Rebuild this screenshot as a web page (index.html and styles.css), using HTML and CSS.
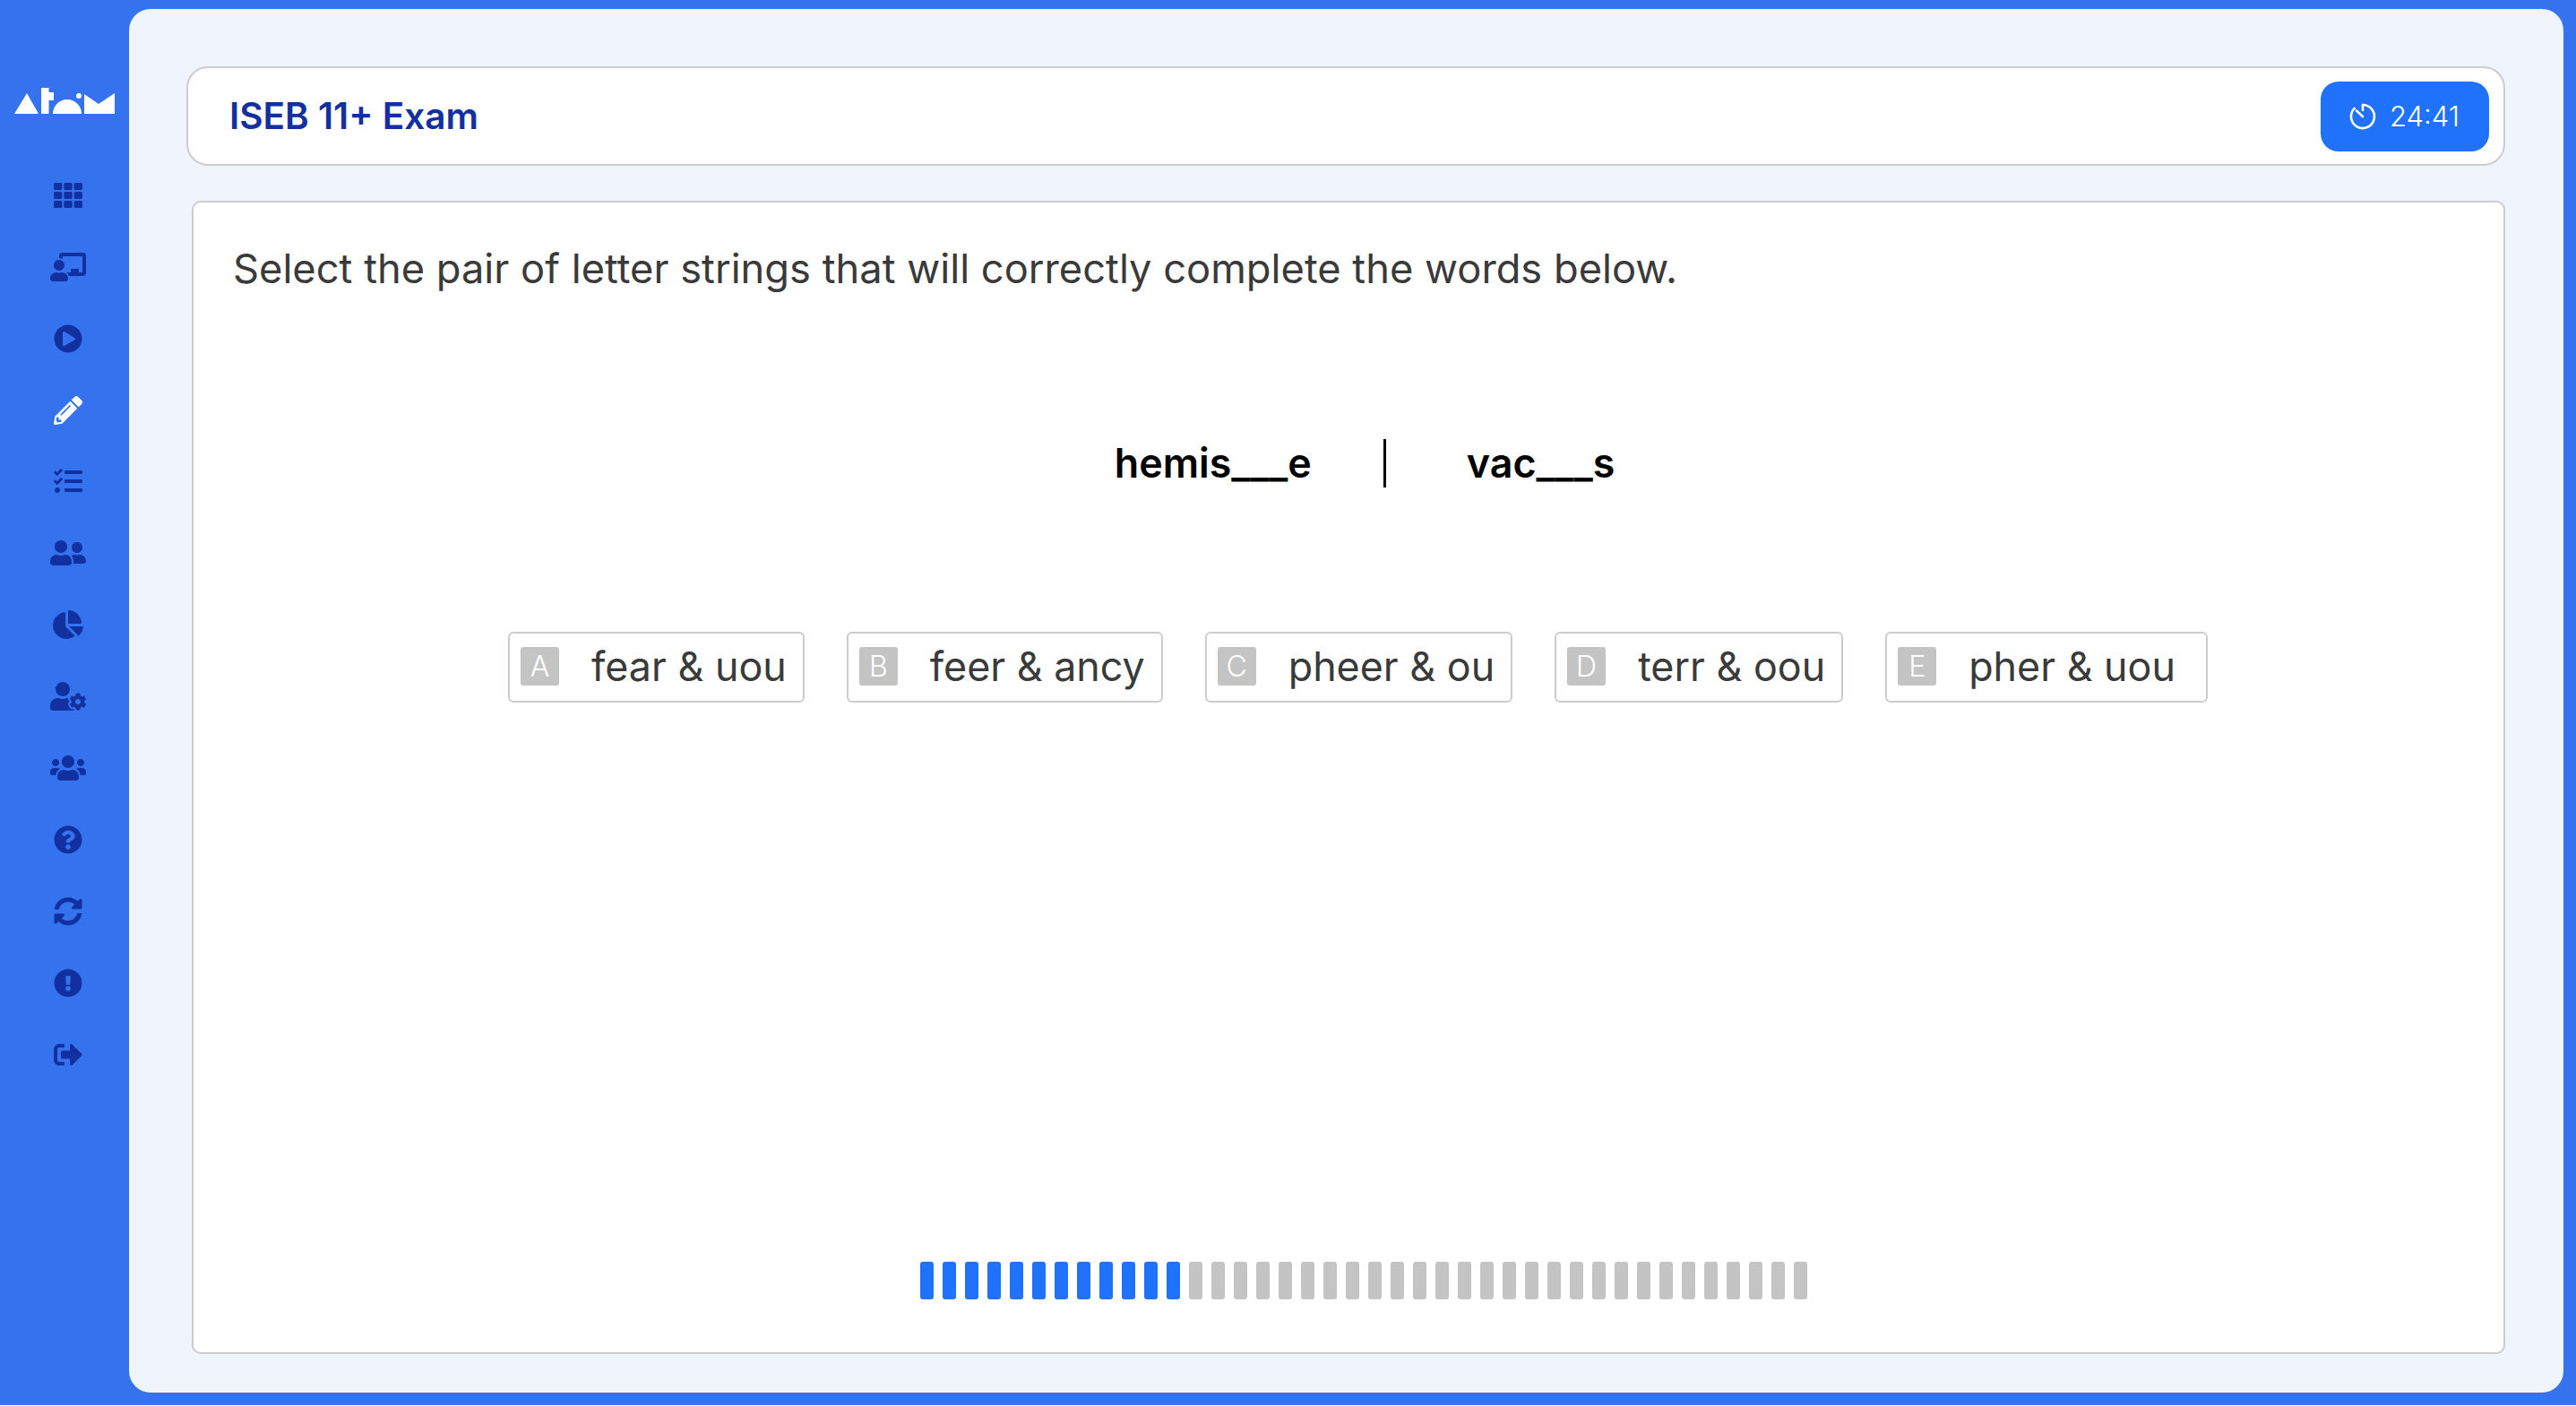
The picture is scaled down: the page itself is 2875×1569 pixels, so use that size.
FILE: index.html
```html
<!DOCTYPE html>
<html lang="en">
<head>
<meta charset="utf-8">
<title>ISEB 11+ Exam</title>
<link rel="stylesheet" href="styles.css">
</head>
<body>
<div class="app">
  <nav class="sidebar">
    <svg class="logo" viewBox="0 0 112 29" aria-label="Atom">
      <polygon points="0,29 14,6 27,29"/>
      <polygon points="30,0 38.5,0 38.5,5 44,5 44,14 38.5,14 38.5,29 30,29"/>
      <path d="M43 29a16 16 0 0 1 32 0z"/>
      <circle cx="72" cy="9" r="3"/>
      <polygon points="78,29 78,7 94,18 112,6 112,29"/>
    </svg>
    <svg class="icon" viewBox="0 0 512 512"><path d="M149.333 56v80c0 13.255-10.745 24-24 24H24c-13.255 0-24-10.745-24-24V56c0-13.255 10.745-24 24-24h101.333c13.255 0 24 10.745 24 24zm181.334 240v-80c0-13.255-10.745-24-24-24H205.333c-13.255 0-24 10.745-24 24v80c0 13.255 10.745 24 24 24h101.333c13.256 0 24.001-10.745 24.001-24zm32-240v80c0 13.255 10.745 24 24 24H488c13.255 0 24-10.745 24-24V56c0-13.255-10.745-24-24-24H386.667c-13.255 0-24 10.745-24 24zm-32 80V56c0-13.255-10.745-24-24-24H205.333c-13.255 0-24 10.745-24 24v80c0 13.255 10.745 24 24 24h101.333c13.256 0 24.001-10.745 24.001-24zm-205.334 56H24c-13.255 0-24 10.745-24 24v80c0 13.255 10.745 24 24 24h101.333c13.255 0 24-10.745 24-24v-80c0-13.255-10.745-24-24-24zM0 376v80c0 13.255 10.745 24 24 24h101.333c13.255 0 24-10.745 24-24v-80c0-13.255-10.745-24-24-24H24c-13.255 0-24 10.745-24 24zm386.667-56H488c13.255 0 24-10.745 24-24v-80c0-13.255-10.745-24-24-24H386.667c-13.255 0-24 10.745-24 24v80c0 13.255 10.745 24 24 24zm0 160H488c13.255 0 24-10.745 24-24v-80c0-13.255-10.745-24-24-24H386.667c-13.255 0-24 10.745-24 24v80c0 13.255 10.745 24 24 24zM181.333 376v80c0 13.255 10.745 24 24 24h101.333c13.255 0 24-10.745 24-24v-80c0-13.255-10.745-24-24-24H205.333c-13.255 0-24 10.745-24 24z"/></svg>
    <svg class="icon" viewBox="0 0 640 512"><path d="M208 352c-2.39 0-4.78.35-7.06 1.09C187.98 357.3 174.35 360 160 360c-14.35 0-27.98-2.7-40.95-6.91-2.28-.74-4.66-1.09-7.05-1.09C49.94 352-.33 402.48 0 464.62.14 490.88 21.73 512 48 512h224c26.27 0 47.86-21.12 48-47.38.33-62.14-49.94-112.62-112-112.62zm-48-32c53.02 0 96-42.98 96-96s-42.98-96-96-96-96 42.98-96 96 42.98 96 96 96zM592 0H208c-26.47 0-48 22.25-48 49.59V96c23.42 0 45.1 6.78 64 17.8V64h352v288h-64v-64H368v64h-76.24c19.1 16.69 33.12 38.73 38.69 64H592c26.47 0 48-22.25 48-49.59V49.59C640 22.25 618.47 0 592 0z"/></svg>
    <svg class="icon" viewBox="0 0 512 512"><path d="M256 8C119 8 8 119 8 256s111 248 248 248 248-111 248-248S393 8 256 8zm115.7 272l-176 101c-15.8 8.8-35.7-2.5-35.7-21V152c0-18.4 19.8-29.8 35.7-21l176 107c16.4 9.2 16.4 32.9 0 42z"/></svg>
    <svg class="icon icon-active" viewBox="0 0 512 512"><path d="M497.9 142.1l-46.1 46.1c-4.7 4.7-12.3 4.7-17 0l-111-111c-4.7-4.7-4.7-12.3 0-17l46.1-46.1c18.7-18.7 49.1-18.7 67.9 0l60.1 60.1c18.8 18.7 18.8 49.1 0 67.9zM284.2 99.8L21.6 362.4.4 483.9c-2.9 16.4 11.4 30.6 27.8 27.8l121.5-21.3 262.6-262.6c4.7-4.7 4.7-12.3 0-17l-111-111c-4.8-4.7-12.4-4.7-17.1 0zM124.1 339.9c-5.5-5.5-5.5-14.3 0-19.8l154-154c5.5-5.5 14.3-5.5 19.8 0s5.5 14.3 0 19.8l-154 154c-5.5 5.5-14.3 5.5-19.8 0zM88 424h48v36.3l-64.5 11.3-31.1-31.1L51.7 376H88v48z"/></svg>
    <svg class="icon" viewBox="0 0 512 512"><path d="M139.61 35.5a12 12 0 0 0-17 0L58.93 98.81l-22.7-22.12a12 12 0 0 0-17 0L3.53 92.41a12 12 0 0 0 0 17l47.59 47.4a12.78 12.78 0 0 0 17.61 0l15.59-15.62L156.52 69a12.09 12.09 0 0 0 .09-17zm0 159.19a12 12 0 0 0-17 0l-63.68 63.72-22.7-22.1a12 12 0 0 0-17 0L3.53 252a12 12 0 0 0 0 17L51 316.5a12.77 12.77 0 0 0 17.6 0l15.7-15.69 72.2-72.22a12 12 0 0 0 .09-16.9zM64 368c-26.49 0-48.59 21.5-48.59 48S37.53 464 64 464a48 48 0 0 0 0-96zm432 16H208a16 16 0 0 0-16 16v32a16 16 0 0 0 16 16h288a16 16 0 0 0 16-16v-32a16 16 0 0 0-16-16zm0-320H208a16 16 0 0 0-16 16v32a16 16 0 0 0 16 16h288a16 16 0 0 0 16-16V80a16 16 0 0 0-16-16zm0 160H208a16 16 0 0 0-16 16v32a16 16 0 0 0 16 16h288a16 16 0 0 0 16-16v-32a16 16 0 0 0-16-16z"/></svg>
    <svg class="icon" viewBox="0 0 640 512"><path d="M192 256c61.9 0 112-50.1 112-112S253.9 32 192 32 80 82.1 80 144s50.1 112 112 112zm76.8 32h-8.3c-20.8 10-43.9 16-68.5 16s-47.6-6-68.5-16h-8.3C51.6 288 0 339.6 0 403.2V432c0 26.5 21.5 48 48 48h288c26.5 0 48-21.5 48-48v-28.8c0-63.6-51.6-115.2-115.2-115.2zM480 256c53 0 96-43 96-96s-43-96-96-96-96 43-96 96 43 96 96 96zm48 32h-3.8c-13.9 4.8-28.6 8-44.2 8s-30.3-3.2-44.2-8H432c-20.4 0-39.2 5.9-55.7 15.4 24.4 26.3 39.7 61.2 39.7 99.8v38.4c0 2.2-.5 4.3-.6 6.4H592c26.5 0 48-21.5 48-48 0-61.9-50.1-112-112-112z"/></svg>
    <svg class="icon" viewBox="0 0 544 512"><path d="M527.79 288H290.5l158.03 158.03c6.04 6.04 15.98 6.53 22.19.68 38.7-36.46 65.32-85.61 73.13-140.86 1.34-9.46-6.51-17.85-16.06-17.85zm-15.83-64.8C503.72 103.74 408.26 8.28 288.8.04 279.68-.59 272 7.1 272 16.24V240h223.77c9.14 0 16.82-7.68 16.19-16.8zM224 288V50.71c0-9.55-8.39-17.4-17.84-16.06C86.99 51.49-4.1 155.6.14 280.37 4.5 408.51 114.83 513.59 243.03 511.98c50.4-.63 96.97-16.87 135.26-44.03 7.9-5.6 8.42-17.23 1.57-24.08L224 288z"/></svg>
    <svg class="icon" viewBox="0 0 640 512"><path d="M610.5 373.3c2.6-14.1 2.6-28.5 0-42.6l25.8-14.9c3-1.7 4.3-5.2 3.3-8.5-6.7-21.6-18.2-41.2-33.2-57.4-2.3-2.5-6-3.1-9-1.4l-25.8 14.9c-10.9-9.3-23.4-16.5-36.9-21.3v-29.8c0-3.4-2.4-6.4-5.7-7.1-22.3-5-45-4.8-66.2 0-3.3.7-5.7 3.7-5.7 7.1v29.8c-13.5 4.8-26 12-36.9 21.3l-25.8-14.9c-2.9-1.7-6.7-1.1-9 1.4-15 16.2-26.5 35.8-33.2 57.4-1 3.3.4 6.8 3.3 8.5l25.8 14.9c-2.6 14.1-2.6 28.5 0 42.6l-25.8 14.9c-3 1.7-4.3 5.2-3.3 8.5 6.7 21.6 18.2 41.1 33.2 57.4 2.3 2.5 6 3.1 9 1.4l25.8-14.9c10.9 9.3 23.4 16.5 36.9 21.3v29.8c0 3.4 2.4 6.4 5.7 7.1 22.3 5 45 4.8 66.2 0 3.3-.7 5.7-3.7 5.7-7.1v-29.8c13.5-4.8 26-12 36.9-21.3l25.8 14.9c2.9 1.7 6.7 1.1 9-1.4 15-16.2 26.5-35.8 33.2-57.4 1-3.3-.4-6.8-3.3-8.5l-25.8-14.9zM496 400.5c-26.8 0-48.5-21.8-48.5-48.5s21.8-48.5 48.5-48.5 48.5 21.8 48.5 48.5-21.7 48.5-48.5 48.5zM224 256c70.7 0 128-57.3 128-128S294.7 0 224 0 96 57.3 96 128s57.3 128 128 128zm201.2 226.5c-2.3-1.2-4.6-2.6-6.8-3.9l-7.9 4.6c-6 3.4-12.8 5.3-19.6 5.3-10.9 0-21.4-4.6-28.9-12.6-18.3-19.8-32.3-43.9-40.2-69.6-5.5-17.7 1.9-36.4 17.9-45.7l7.9-4.6c-.1-2.6-.1-5.2 0-7.8l-7.9-4.6c-16-9.2-23.4-28-17.9-45.7.9-2.9 2.2-5.8 3.2-8.7-3.8-.3-7.5-1.2-11.4-1.2h-16.7c-22.2 10.2-46.9 16-72.9 16s-50.6-5.8-72.9-16h-16.7C60.2 288 0 348.2 0 422.4V464c0 26.5 21.5 48 48 48h352c10.1 0 19.5-3.2 27.2-8.5-1.2-3.8-2-7.7-2-11.8v-9.2z"/></svg>
    <svg class="icon" viewBox="0 0 640 512"><path d="M96 224c35.3 0 64-28.7 64-64s-28.7-64-64-64-64 28.7-64 64 28.7 64 64 64zm448 0c35.3 0 64-28.7 64-64s-28.7-64-64-64-64 28.7-64 64 28.7 64 64 64zm32 32h-64c-17.6 0-33.5 7.1-45.1 18.6 40.3 22.1 68.9 62 75.1 109.4h66c17.7 0 32-14.3 32-32v-32c0-35.3-28.7-64-64-64zm-256 0c61.9 0 112-50.1 112-112S381.9 32 320 32 208 82.1 208 144s50.1 112 112 112zm76.8 32h-8.3c-20.8 10-43.9 16-68.5 16s-47.6-6-68.5-16h-8.3C179.6 288 128 339.6 128 403.2V432c0 26.5 21.5 48 48 48h288c26.5 0 48-21.5 48-48v-28.8c0-63.6-51.6-115.2-115.2-115.2zm-223.7-13.4C161.5 263.1 145.6 256 128 256H64c-35.3 0-64 28.7-64 64v32c0 17.7 14.3 32 32 32h65.9c6.3-47.4 34.9-87.3 75.2-109.4z"/></svg>
    <svg class="icon" viewBox="0 0 512 512"><path d="M504 256c0 136.997-111.043 248-248 248S8 392.997 8 256C8 119.083 119.043 8 256 8s248 111.083 248 248zM262.655 90c-54.497 0-89.255 22.957-116.549 63.758-3.536 5.286-2.353 12.415 2.715 16.258l34.699 26.31c5.205 3.947 12.621 3.008 16.665-2.122 17.864-22.658 30.113-35.797 57.303-35.797 20.429 0 45.698 13.148 45.698 32.958 0 14.976-12.363 22.667-32.534 33.976C247.128 238.528 216 254.941 216 296v4c0 6.627 5.373 12 12 12h56c6.627 0 12-5.373 12-12v-1.333c0-28.462 83.186-29.647 83.186-106.667 0-58.002-60.165-102-116.531-102zM256 338c-25.365 0-46 20.635-46 46 0 25.364 20.635 46 46 46s46-20.636 46-46c0-25.365-20.635-46-46-46z"/></svg>
    <svg class="icon" viewBox="0 0 512 512"><path d="M370.72 133.28C339.458 104.008 298.888 87.962 255.848 88c-77.458.068-144.328 53.178-162.791 126.85-1.344 5.363-6.122 9.15-11.651 9.15H24.103c-7.498 0-13.194-6.807-11.807-14.176C33.933 94.924 134.813 8 256 8c66.448 0 126.791 26.136 171.315 68.685L463.03 40.97C478.149 25.851 504 36.559 504 57.941V192c0 13.255-10.745 24-24 24H345.941c-21.382 0-32.09-25.851-16.971-40.971l41.75-41.749zM32 296h134.059c21.382 0 32.09 25.851 16.971 40.971l-41.75 41.75c31.262 29.273 71.835 45.319 114.876 45.28 77.418-.07 144.315-53.144 162.787-126.849 1.344-5.363 6.122-9.15 11.651-9.15h57.304c7.498 0 13.194 6.807 11.807 14.176C478.067 417.076 377.187 504 256 504c-66.448 0-126.791-26.136-171.315-68.685L48.97 471.03C33.851 486.149 8 475.441 8 454.059V320c0-13.255 10.745-24 24-24z"/></svg>
    <svg class="icon" viewBox="0 0 512 512"><path d="M504 256c0 136.997-111.043 248-248 248S8 392.997 8 256C8 119.083 119.043 8 256 8s248 111.083 248 248zm-248 50c-25.405 0-46 20.595-46 46s20.595 46 46 46 46-20.595 46-46-20.595-46-46-46zm-43.673-165.346l7.418 136c.347 6.364 5.609 11.346 11.982 11.346h48.546c6.373 0 11.635-4.982 11.982-11.346l7.418-136c.375-6.874-5.098-12.654-11.982-12.654h-63.383c-6.884 0-12.356 5.78-11.981 12.654z"/></svg>
    <svg class="icon" viewBox="0 0 512 512"><path d="M497 273L329 441c-15 15-41 4.5-41-17v-96H152c-13.3 0-24-10.7-24-24v-96c0-13.3 10.7-24 24-24h136V88c0-21.4 25.9-32 41-17l168 168c9.3 9.4 9.3 24.6 0 34zM192 436v-40c0-6.6-5.4-12-12-12H96c-17.7 0-32-14.3-32-32V160c0-17.7 14.3-32 32-32h84c6.6 0 12-5.4 12-12V76c0-6.6-5.4-12-12-12H96c-53 0-96 43-96 96v192c0 53 43 96 96 96h84c6.6 0 12-5.4 12-12z"/></svg>
  </nav>
  <main class="panel">
    <header class="topbar">
      <h1 class="title">ISEB 11+ Exam</h1>
      <div class="timer">
        <svg class="clock" viewBox="0 0 32 32"><path d="M16 3a13 13 0 1 1-9.2 3.8M16 3v6M9 9.5l7 6.5"/></svg>
        <span>24:41</span>
      </div>
    </header>
    <section class="card">
      <p class="question">Select the pair of letter strings that will correctly complete the words below.</p>
      <div class="words">
        <span class="word">hemis___e</span>
        <span class="divider"></span>
        <span class="word">vac___s</span>
      </div>
      <div class="options">
        <div class="option"><span class="letter">A</span><span>fear &amp; uou</span></div>
        <div class="option"><span class="letter">B</span><span>feer &amp; ancy</span></div>
        <div class="option"><span class="letter">C</span><span>pheer &amp; ou</span></div>
        <div class="option"><span class="letter">D</span><span>terr &amp; oou</span></div>
        <div class="option option-wide"><span class="letter">E</span><span>pher &amp; uou</span></div>
      </div>
      <div class="progress">
        <i class="seg done"></i><i class="seg done"></i><i class="seg done"></i><i class="seg done"></i><i class="seg done"></i><i class="seg done"></i><i class="seg done"></i><i class="seg done"></i><i class="seg done"></i><i class="seg done"></i><i class="seg done"></i><i class="seg done"></i>
        <i class="seg"></i><i class="seg"></i><i class="seg"></i><i class="seg"></i><i class="seg"></i><i class="seg"></i><i class="seg"></i><i class="seg"></i><i class="seg"></i><i class="seg"></i><i class="seg"></i><i class="seg"></i><i class="seg"></i><i class="seg"></i><i class="seg"></i><i class="seg"></i><i class="seg"></i><i class="seg"></i><i class="seg"></i><i class="seg"></i><i class="seg"></i><i class="seg"></i><i class="seg"></i><i class="seg"></i><i class="seg"></i><i class="seg"></i><i class="seg"></i><i class="seg"></i>
      </div>
    </section>
  </main>
</div>
</body>
</html>
```

FILE: styles.css
```css
* { box-sizing: border-box; }
html, body { margin: 0; padding: 0; background: #fff; }
body { font-family: Inter, "Liberation Sans", sans-serif; color: #3a3a3a; }
.app { display: flex; width: 2875px; height: 1568px; background: #3573ee; overflow: hidden; }
.sidebar { flex: 0 0 144px; display: flex; flex-direction: column; align-items: center; padding: 98px 0 0 8px; gap: 47.9px; }
.logo { display: block; width: 112px; height: 29px; fill: #fff; align-self: flex-start; margin: 0 0 27px 8px; }
.icon { display: block; height: 32px; flex: none; fill: #12309f; }
.icon-active { fill: #fff; }
.panel { flex: 1; display: flex; flex-direction: column; margin: 10px 14px 14px 0; padding: 64px 65px 43px 64px; background: #f0f5fd; border-radius: 24px; }
.topbar { flex: none; display: flex; align-items: center; justify-content: space-between; height: 111px; padding: 0 16px 0 46px; background: #fff; border: 2px solid #ccc; border-radius: 24px; }
.title { margin: 0; font-size: 40.5px; font-weight: 600; color: #12309f; }
.timer { display: flex; align-items: center; gap: 14px; width: 188px; height: 78px; padding-left: 31px; font-size: 31px; font-weight: 300; color: #fff; background: #1f72f9; border-radius: 20px; }
.clock { width: 32px; height: 32px; fill: none; stroke: #fff; stroke-width: 2.6; stroke-linecap: round; }
.card { flex: 1; display: flex; flex-direction: column; margin: 39px 0 0 6px; background: #fff; border: 2px solid #ccc; border-radius: 10px; }
.question { margin: 46px 0 0 44px; font-size: 45.25px; line-height: 56px; }
.words { display: flex; align-items: center; justify-content: center; margin-top: 162px; padding-left: 36px; height: 54px; font-size: 44.8px; font-weight: 600; color: #000; }
.divider { width: 3px; height: 54px; margin: 0 90px 0 80px; background: #000; }
.options { display: flex; justify-content: center; gap: 47px; margin-top: 161px; padding-left: 21px; }
.option { display: flex; align-items: center; height: 79px; padding: 0 18px 2px 12px; font-size: 44.8px; background: #fff; border: 2px solid #ccc; border-radius: 6px; }
.option-wide { padding-right: 34px; }
.letter { flex: none; display: flex; align-items: center; justify-content: center; width: 43px; height: 43px; margin-right: 36px; font-size: 32px; font-weight: 300; color: #fff; background: #c4c4c4; border-radius: 3px; }
.progress { display: flex; justify-content: center; gap: 10px; margin-top: auto; margin-bottom: 59px; padding-left: 34px; }
.seg { display: block; width: 15px; height: 42px; background: #c4c4c4; border-radius: 3px; }
.seg.done { background: #1f72f9; }
```
